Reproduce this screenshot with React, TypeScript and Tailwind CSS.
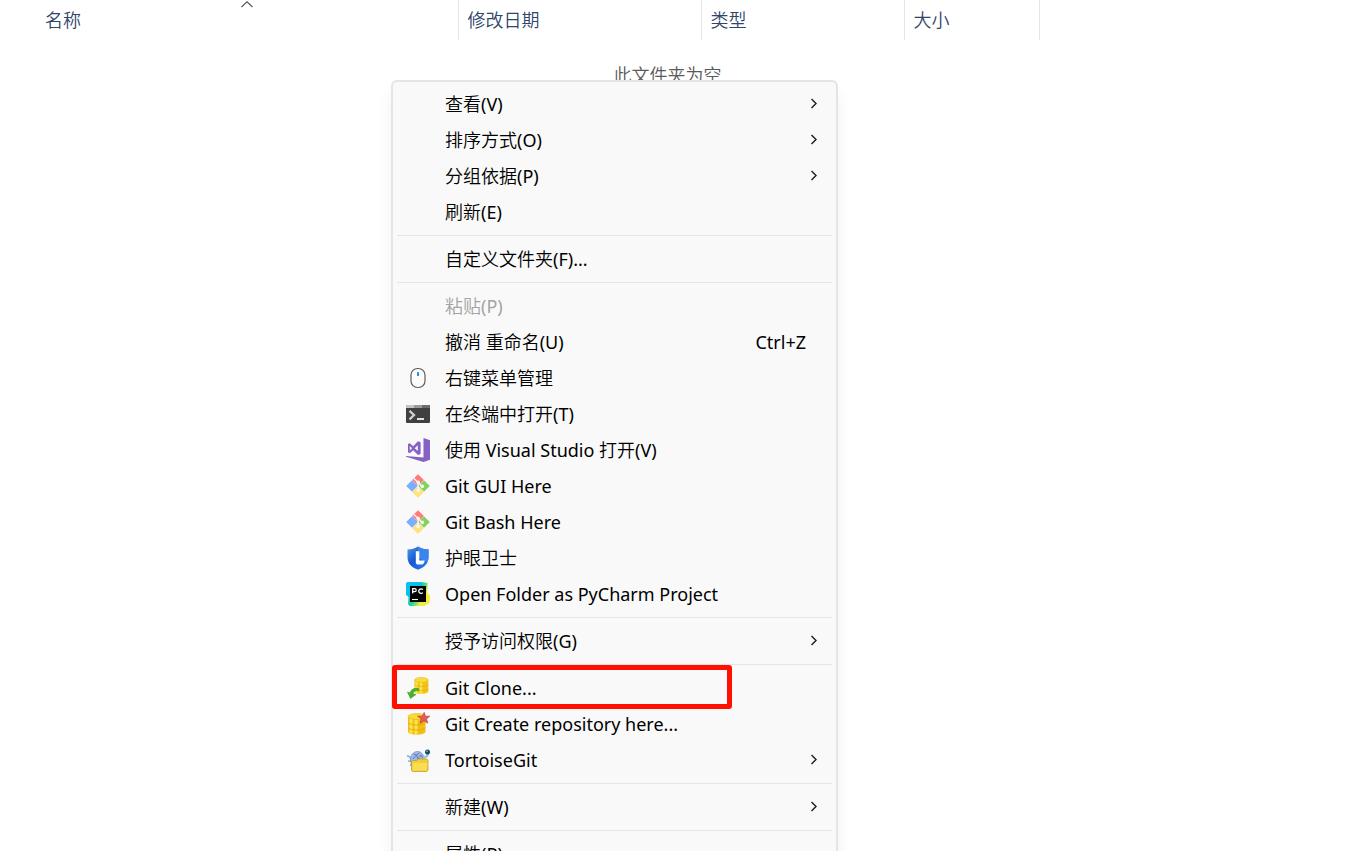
import type { ReactNode } from "react";

const MouseIcon = () => (
  <svg viewBox="0 0 24 24" className="size-6" aria-hidden="true">
    <rect x="5" y="2.500" width="14" height="19" rx="6.600" fill="#fcfcfc" stroke="#5c5c5f" strokeWidth="1.200" />
    <rect x="11" y="6" width="2" height="4" rx="0.400" fill="#2a8ad4" />
  </svg>
);

const TerminalIcon = () => (
  <svg viewBox="0 0 24 24" className="size-6" aria-hidden="true">
    <rect x="0" y="3" width="24" height="18" rx="1" fill="#404040" />
    <path d="M0 6V4a1 1 0 0 1 1-1h7v3z" fill="#c4c4c4" />
    <path d="M8 3h8v3H8z" fill="#9a9a9a" />
    <path d="M16 3h7a1 1 0 0 1 1 1v2h-8z" fill="#6d6d6d" />
    <path d="M3.500 8.800 8 13l-4.500 4.300" fill="none" stroke="#d0d0d0" strokeWidth="2.300" />
    <path d="M11 17h7" stroke="#f4f4f4" strokeWidth="1.800" />
  </svg>
);

const VisualStudioIcon = () => (
  <svg viewBox="0 0 24 24" className="size-6" aria-hidden="true">
    <path d="M17.500 0 24 2.200v19.600L17.500 24 0 18.800v-.800l17.500 1.500z" fill="#8661c5" />
    <path
      d="M2 6 3.800 5.200 7.200 8.200 12 3.200 14.600 4.300V16L12 17.100 7.200 12.200 3.800 15.200 2 14.300z M3.800 8v4.400l2.200-2.200z M11.800 7.300 8.700 10.200l3.100 2.900z"
      fill="#8661c5"
      fillRule="evenodd"
    />
  </svg>
);

const GitIcon = () => (
  <svg viewBox="0 0 24 24" className="size-6" aria-hidden="true">
    <path d="M12 0.200 17.900 6.100 12 12 6.100 6.100z" fill="#ff7b7b" />
    <path d="M6 6.200 11.800 12 6 17.800 0.200 12z" fill="#7baeff" />
    <path d="M18 6.200 23.800 12 18 17.800 12.200 12z" fill="#85d15b" />
    <path d="M12 12.200 17.800 18 12 23.800 6.200 18z" fill="#ffe27a" />
    <path d="M7.600 4.300 12.200 8.600V17 M12.200 8.600 16.400 12.600" fill="none" stroke="#faf8f7" strokeWidth="1.300" />
    <circle cx="12.200" cy="8.400" r="1.800" fill="#faf8f7" />
    <circle cx="12.200" cy="16.400" r="1.800" fill="#faf8f7" />
    <circle cx="16.300" cy="12.400" r="1.800" fill="#faf8f7" />
  </svg>
);

const ShieldIcon = () => (
  <svg viewBox="0 0 24 24" className="size-6" aria-hidden="true">
    <defs>
      <linearGradient id="shield" x1="0" y1="0" x2="1" y2="1">
        <stop offset="0" stopColor="#4c9bf5" />
        <stop offset="0.450" stopColor="#1558d0" />
        <stop offset="1" stopColor="#2f86f2" />
      </linearGradient>
    </defs>
    <path d="M12 0.500c3 2 6.600 2.900 10.500 3v7.800c0 6.400-4.200 10.100-10.500 12.400C5.700 21.400 1.500 17.700 1.500 11.300V3.500c3.900-.100 7.500-1 10.500-3z" fill="url(#shield)" />
    <path d="M12 0.500c3 2 6.600 2.900 10.500 3v7.800c0 1.800-.300 3.300-1 4.700L12 12z" fill="#3b86ee" />
    <path d="M9.800 5.200h3.500v9.300h5.400c-.300 2.600-1.500 4-3.200 4.100h-3.300c-1.600 0-2.400-.800-2.400-2.400z" fill="#fff" />
  </svg>
);

const PyCharmIcon = () => (
  <svg viewBox="0 0 24 24" className="size-6" aria-hidden="true">
    <defs>
      <linearGradient id="pycharm" x1="0" y1="0.200" x2="1" y2="0.800">
        <stop offset="0.250" stopColor="#10bff0" />
        <stop offset="0.500" stopColor="#21d789" />
        <stop offset="0.750" stopColor="#e8f04a" />
      </linearGradient>
    </defs>
    <path d="M0 1.500 1.500 0H15l6.500 1v10l2.500 3-.800 7-5.200 3H3.500L2 22l.500-7L0 12z" fill="url(#pycharm)" />
    <path d="M0 1.500 1.500 0H15l1.500 4H4v11.500L0 13z" fill="#0cc0ee" />
    <path d="M20 9.500 24 14l-.800 7-5.200 3h-4l-1-4h7z" fill="#f0ee3c" />
    <rect x="4" y="4" width="16" height="16" fill="#000" />
    <path d="M6.700 11.500V6.700h2a1.500 1.500 0 0 1 0 3h-2 M16.800 7.600a2.300 2.300 0 1 0 0 3" fill="none" stroke="#fff" strokeWidth="1.300" />
    <path d="M6 17.500h6" stroke="#fff" strokeWidth="1.100" />
  </svg>
);

const CloneIcon = () => (
  <svg viewBox="0 0 24 24" className="size-6" aria-hidden="true">
    <path d="M8.500 4v11.500c0 3 13.800 3 13.800 0V4z" fill="#f2c414" />
    <path d="M10.500 5.500v12M15 6v12" stroke="#fae34c" strokeWidth="2.500" />
    <ellipse cx="15.400" cy="4" rx="6.900" ry="2.500" fill="#f9dc3a" stroke="#e6b81c" strokeWidth="0.600" />
    <path d="M8.500 8.500c1.500 2.500 12.300 2.500 13.800 0M8.500 12.500c1.500 2.500 12.300 2.500 13.800 0" fill="none" stroke="#dfaa14" strokeWidth="0.700" />
    <path d="M12.500 12.500c-4.500-.800-7.700 1-8.400 4.500L1.500 16l3 6.500 5.500-4-3-.500c.400-2.500 2.200-3.700 5.500-3.300z" fill="#43b52c" stroke="#2c8e1c" strokeWidth="0.500" />
  </svg>
);

const CreateIcon = () => (
  <svg viewBox="0 0 24 24" className="size-6" aria-hidden="true">
    <path d="M2 4.500v15c0 4.200 17.500 4.200 17.500 0v-15z" fill="#f2be12" />
    <path d="M5 6.500v15M10 7.500v15" stroke="#fbe34a" strokeWidth="3" />
    <ellipse cx="10.700" cy="4.500" rx="8.700" ry="3" fill="#f9d936" stroke="#e6b51c" strokeWidth="0.600" />
    <path d="M2 10.500c2 3.300 15.500 3.300 17.500 0M2 15.500c2 3.300 15.500 3.300 17.500 0" fill="none" stroke="#dfa414" strokeWidth="0.800" />
    <path d="m18.200.400 1.300 3.900 4.300-.100-3.300 2.800 1.400 4.200-3.800-2.200-4.100 2.300 1.200-4.300L11.500 4l4.600.200z" fill="#e15c56" stroke="#b93e3a" strokeWidth="0.600" />
  </svg>
);

const TortoiseIcon = () => (
  <svg viewBox="0 0 24 24" className="size-6" aria-hidden="true">
    <path d="M1 7.500 4 9l2 5-1.500 4M2 13l4 .500" fill="none" stroke="#8eb0d6" strokeWidth="1.700" />
    <path d="M4.500 12c0-5 3-8.500 7-8.500s6.500 3.500 6.500 8v3h-13z" fill="#a4b9e8" stroke="#6b86c2" strokeWidth="0.700" />
    <path d="m7.500 6 3 1 3-2M7 11l3.500-4 1.500 4 3-4 2 3" fill="none" stroke="#4b69ab" strokeWidth="0.800" />
    <path d="M17 9.500c2.500 0 4.500-1 5-4" fill="none" stroke="#9fc3e4" strokeWidth="2.500" />
    <circle cx="21.500" cy="4" r="2.500" fill="#1c4a6e" />
    <circle cx="21" cy="3.200" r="0.800" fill="#80cbe8" />
    <path d="M5.500 22.500V13.500l1-1h4l1.500-1.500H21l1 1V22l-1 1.500H6.500z" fill="#f3cd34" stroke="#c09a1c" strokeWidth="0.700" />
    <path d="M7 15h14.500l-.800 7.500H7z" fill="#f9de55" />
  </svg>
);

const Chevron = () => (
  <svg viewBox="0 0 8 12" className="h-3 w-2" aria-hidden="true">
    <path d="M1.500 1 6 5.500 1.500 10" fill="none" stroke="#1a1a1a" strokeWidth="1.400" />
  </svg>
);

type Item = {
  label: string;
  icon?: ReactNode;
  shortcut?: string;
  submenu?: boolean;
  disabled?: boolean;
  marked?: boolean;
};

const groups: Item[][] = [
  [
    { label: "查看(V)", submenu: true },
    { label: "排序方式(O)", submenu: true },
    { label: "分组依据(P)", submenu: true },
    { label: "刷新(E)" },
  ],
  [{ label: "自定义文件夹(F)..." }],
  [
    { label: "粘贴(P)", disabled: true },
    { label: "撤消 重命名(U)", shortcut: "Ctrl+Z" },
    { label: "右键菜单管理", icon: <MouseIcon /> },
    { label: "在终端中打开(T)", icon: <TerminalIcon /> },
    { label: "使用 Visual Studio 打开(V)", icon: <VisualStudioIcon /> },
    { label: "Git GUI Here", icon: <GitIcon /> },
    { label: "Git Bash Here", icon: <GitIcon /> },
    { label: "护眼卫士", icon: <ShieldIcon /> },
    { label: "Open Folder as PyCharm Project", icon: <PyCharmIcon /> },
  ],
  [{ label: "授予访问权限(G)", submenu: true }],
  [
    { label: "Git Clone...", icon: <CloneIcon />, marked: true },
    { label: "Git Create repository here...", icon: <CreateIcon /> },
    { label: "TortoiseGit", icon: <TortoiseIcon />, submenu: true },
  ],
  [{ label: "新建(W)", submenu: true }],
  [{ label: "属性(R)" }],
];

function MenuItem({ item }: { item: Item }) {
  return (
    <li role="none" className="relative">
      <button
        type="button"
        role="menuitem"
        disabled={item.disabled}
        className="flex h-9 w-full items-center pr-3.5 pl-[9px] text-left text-black disabled:text-[#a3a3a3]"
      >
        <span className="mr-[15px] size-6 shrink-0">{item.icon}</span>
        <span className="grow whitespace-nowrap">{item.label}</span>
        {item.shortcut && <span className="mr-3">{item.shortcut}</span>}
        {item.submenu && <Chevron />}
      </button>
      {item.marked && (
        <span className="pointer-events-none absolute -top-[5px] -left-[5px] h-11 w-[340px] rounded-[3px] border-5 border-[#ff1000]" />
      )}
    </li>
  );
}

const columns = [
  { label: "名称", cell: "w-[458px] pl-[45px]", sorted: true },
  { label: "修改日期", cell: "w-[243px] pl-[9px]" },
  { label: "类型", cell: "w-[203px] pl-[9px]" },
  { label: "大小", cell: "w-[135px] pl-[9px]" },
];

export default function App() {
  return (
    <main className="relative h-screen overflow-hidden bg-white font-['Noto_Sans','Noto_Sans_CJK_SC_DemiLight','Noto_Sans_CJK_SC',sans-serif] text-lg leading-6">
      <table className="w-[1039px] table-fixed border-collapse">
        <thead>
          <tr className="h-10">
            {columns.map((column) => (
              <th
                key={column.label}
                scope="col"
                className={`relative border-r border-[#e5e5e5] p-0 text-left font-light text-[#2f466b] ${column.cell}`}
              >
                {column.label}
                {column.sorted && (
                  <svg viewBox="0 0 12 7" className="absolute top-px left-[241px] h-[7px] w-3" aria-hidden="true">
                    <path d="M0.500 6 6 0.800 11.500 6" fill="none" stroke="#555" strokeWidth="1.100" />
                  </svg>
                )}
              </th>
            ))}
          </tr>
        </thead>
      </table>
      <p className="pt-[23px] pr-[18px] text-center font-light text-[#5a5a5a]">此文件夹为空</p>

      <div className="absolute top-20 left-[391px] w-[447px] rounded-md border-2 border-[#e5e5e5] bg-[#f9f9f9] p-1 shadow-[0_12px_16px_rgba(0,0,0,0.06)]">
        <ul role="menu">
          {groups.map((items, index) => (
            <li key={items[0].label} role="none">
              {index > 0 && <hr className="my-[5px] border-[#e5e5e5]" />}
              <ul role="group">
                {items.map((item) => (
                  <MenuItem key={item.label} item={item} />
                ))}
              </ul>
            </li>
          ))}
        </ul>
      </div>
    </main>
  );
}
